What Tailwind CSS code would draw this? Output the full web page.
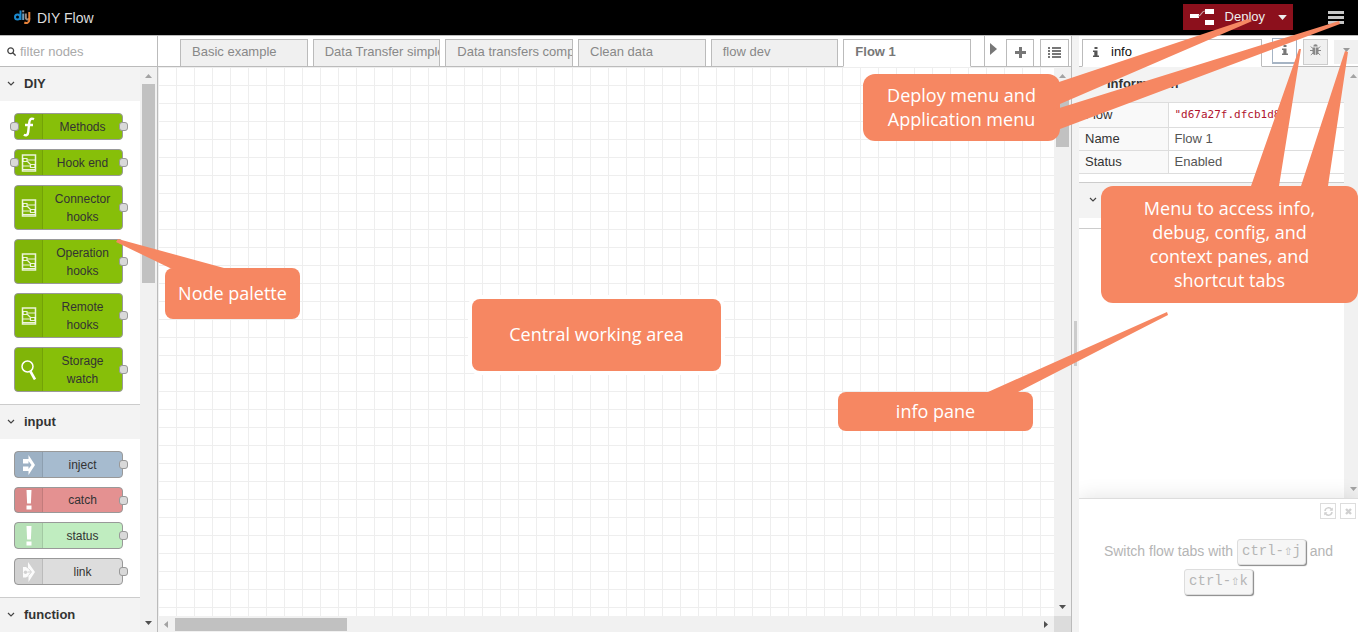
<!DOCTYPE html>
<html lang="en">
<head>
<meta charset="utf-8">
<title>DIY Flow</title>
<script src="https://cdn.jsdelivr.net/npm/@tailwindcss/browser@4"></script>
</head>
<body class="relative flex h-screen flex-col overflow-hidden bg-white pr-0.5 font-['Liberation_Sans',Arial,sans-serif] text-[13px] text-[#333]">

<svg class="hidden">
  <defs>
    <symbol id="hooks" viewBox="0 0 16 20"><g fill="none" stroke="#fff" stroke-opacity=".85"><path d="M1.500 2h13v16h-13z" stroke-width="1.500"/><path d="M2 5.500h4v3H2zM9.500 11.500h4.500v3H9.500zM6 7h8M2 13h7.500M6.500 8.500l3 3" stroke-width="1.200"/><path d="M2 16.500h12" stroke-width="1"/></g></symbol>
    <symbol id="bang" viewBox="0 0 10 20"><path d="M2.500 0h5l-.6 13.500H3.100zM2.500 15.500h5v4h-5z" fill="#fff"/></symbol>
    <symbol id="chev" viewBox="0 0 8 6"><path d="M1 1l3 3 3-3" fill="none" stroke="#444" stroke-width="1.200"/></symbol>
    <symbol id="up" viewBox="0 0 7 4"><path d="M0 4L3.500 0 7 4z"/></symbol>
    <symbol id="down" viewBox="0 0 7 4"><path d="M0 0h7L3.500 4z"/></symbol>
    <symbol id="info" viewBox="0 0 6 10"><path d="M1.500 0h3v2h-3zM0 3.500h4.500V8.500H6V10H0V8.500h1.300V5H0z"/></symbol>
  </defs>
</svg>

<header class="flex h-9 shrink-0 items-center border-b border-[#bbb] bg-black pb-px">
  <svg class="ml-3.5 h-4 w-[17px]" viewBox="0 0 17 16" fill="none" stroke-width="2">
    <circle cx="3.500" cy="8" r="2.500" stroke="#1b8ad0"/><path d="M6.500 1.500v9.500" stroke="#1b8ad0"/>
    <path d="M9.200 4.500V11" stroke="#6d9dbd"/><path d="M9.200 1.300v2" stroke="#8a8f96"/>
    <path d="M11.800 4.500v4c0 2.500 3.500 2.500 3.500.5" stroke="#9a8a80"/><path d="M15.300 3v8c0 3-3 3.500-5 2.500" stroke="#e8833a"/>
  </svg>
  <h1 class="ml-1.5 grow pt-0.5 text-sm text-[#ddd]">DIY Flow</h1>
  <div class="mr-[35px] flex h-[26px] bg-[#8c101c] text-[#eee]">
    <button type="button" class="flex items-center gap-2.5 pl-1.5">
      <svg class="h-4 w-[26px]" viewBox="0 0 26 16"><path d="M1 5h9v4H1zM16 0h9v5h-9zM16 11h9v5h-9z" fill="#fff"/><path d="M9 7c4 0 3-5 7-5" fill="none" stroke="#c9a0a4" stroke-width="1.200"/></svg>
      <span>Deploy</span>
    </button>
    <button type="button" aria-label="Deploy options" class="flex w-[28px] items-center justify-end pr-1.5"><svg class="h-[5px] w-[9px] fill-[#eee]" viewBox="0 0 7 4"><use href="#down"/></svg></button>
  </div>
  <button type="button" aria-label="Application menu" class="mr-3.5 flex w-4 flex-col gap-0.5">
    <span class="h-[3px] w-full bg-[#c7c7c7]"></span><span class="h-[3px] w-full bg-[#c7c7c7]"></span><span class="h-[3px] w-full bg-[#c7c7c7]"></span>
  </button>
</header>

<main class="flex min-h-0 grow">
  <aside class="flex w-[158px] shrink-0 flex-col border-r border-[#bbb]">
    <label class="flex h-[31px] shrink-0 items-center gap-1 border-b border-[#bbb] pl-[7px]">
      <svg class="size-[9px] shrink-0" viewBox="0 0 9 9" fill="none" stroke="#444" stroke-width="1.300"><circle cx="3.700" cy="3.700" r="2.900"/><path d="M5.800 5.800l2.800 2.800"/></svg>
      <input type="text" aria-label="filter nodes" placeholder="filter nodes" class="w-full min-w-0 pt-px outline-none placeholder:text-[#aaa]">
    </label>
    <div class="flex min-h-0 grow overflow-hidden">
      <div class="flex w-[140px] flex-col text-xs">
        <button type="button" class="flex h-[34px] shrink-0 items-center gap-[9px] bg-[#f3f3f3] pl-[7px] text-[13px] font-bold"><svg class="h-1.5 w-2"><use href="#chev"/></svg>DIY</button>
        <ul class="flex shrink-0 flex-col gap-[9px] border-b border-[#ccc] py-3 pl-3.5 text-center leading-[18px]">
          <li class="relative flex h-[27px] w-[109px] items-center rounded border border-[#999] bg-[#87bf09]">
            <span class="flex h-full w-7 items-center justify-center border-r border-black/10 bg-black/5"><svg class="h-5 w-3" viewBox="0 0 12 20" fill="none" stroke="#fff" stroke-width="2.400"><path d="M11 2.200C7.500.5 6.500 3 6.200 6l-1 9c-.3 3-2 4-4.400 2.800M2 8h8"/></svg></span>
            <span class="grow">Methods</span>
            <i class="absolute -left-[5px] size-[9px] rounded-[3px] border border-[#999] bg-[#d9d9d9]"></i><i class="absolute -right-1.5 size-[9px] rounded-[3px] border border-[#999] bg-[#d9d9d9]"></i>
          </li>
          <li class="relative flex h-[27px] w-[109px] items-center rounded border border-[#999] bg-[#87bf09]">
            <span class="flex h-full w-7 items-center justify-center border-r border-black/10 bg-black/5"><svg class="h-5 w-4"><use href="#hooks"/></svg></span>
            <span class="grow">Hook end</span>
            <i class="absolute -left-[5px] size-[9px] rounded-[3px] border border-[#999] bg-[#d9d9d9]"></i><i class="absolute -right-1.5 size-[9px] rounded-[3px] border border-[#999] bg-[#d9d9d9]"></i>
          </li>
          <li class="relative flex h-[45px] w-[109px] items-center rounded border border-[#999] bg-[#87bf09]">
            <span class="flex h-full w-7 items-center justify-center border-r border-black/10 bg-black/5"><svg class="h-5 w-4"><use href="#hooks"/></svg></span>
            <span class="grow">Connector<br>hooks</span>
            <i class="absolute -right-1.5 size-[9px] rounded-[3px] border border-[#999] bg-[#d9d9d9]"></i>
          </li>
          <li class="relative flex h-[45px] w-[109px] items-center rounded border border-[#999] bg-[#87bf09]">
            <span class="flex h-full w-7 items-center justify-center border-r border-black/10 bg-black/5"><svg class="h-5 w-4"><use href="#hooks"/></svg></span>
            <span class="grow">Operation<br>hooks</span>
            <i class="absolute -right-1.5 size-[9px] rounded-[3px] border border-[#999] bg-[#d9d9d9]"></i>
          </li>
          <li class="relative flex h-[45px] w-[109px] items-center rounded border border-[#999] bg-[#87bf09]">
            <span class="flex h-full w-7 items-center justify-center border-r border-black/10 bg-black/5"><svg class="h-5 w-4"><use href="#hooks"/></svg></span>
            <span class="grow">Remote<br>hooks</span>
            <i class="absolute -right-1.5 size-[9px] rounded-[3px] border border-[#999] bg-[#d9d9d9]"></i>
          </li>
          <li class="relative flex h-[45px] w-[109px] items-center rounded border border-[#999] bg-[#87bf09]">
            <span class="flex h-full w-7 items-center justify-center border-r border-black/10 bg-black/5"><svg class="h-5 w-4" viewBox="0 0 16 20" fill="none" stroke="#fff"><circle cx="6.500" cy="6.500" r="5.500" stroke-width="1.500"/><path d="M9.500 11.500l4.500 8" stroke-width="2.600"/></svg></span>
            <span class="grow">Storage<br>watch</span>
            <i class="absolute -right-1.5 size-[9px] rounded-[3px] border border-[#999] bg-[#d9d9d9]"></i>
          </li>
        </ul>
        <button type="button" class="flex h-[34px] shrink-0 items-center gap-[9px] bg-[#f3f3f3] pl-[7px] text-[13px] font-bold"><svg class="h-1.5 w-2"><use href="#chev"/></svg>input</button>
        <ul class="flex shrink-0 flex-col gap-[9px] border-b border-[#ccc] pt-3 pb-[11px] pl-3.5 text-center leading-[18px]">
          <li class="relative flex h-[27px] w-[109px] items-center rounded border border-[#999] bg-[#a6bbcf]">
            <span class="flex h-full w-7 items-center justify-center border-r border-black/10 bg-black/5"><svg class="h-5 w-3" viewBox="0 0 12 20" fill="#fff"><path d="M0 4h5.500V0L12 10 5.500 20v-4H0v-4.500h5.500V14l3-4-3-4v2.500H0z"/></svg></span>
            <span class="grow">inject</span>
            <i class="absolute -right-1.5 size-[9px] rounded-[3px] border border-[#999] bg-[#d9d9d9]"></i>
          </li>
          <li class="relative flex h-[26px] w-[109px] items-center rounded border border-[#999] bg-[#e49191]">
            <span class="flex h-full w-7 items-center justify-center border-r border-black/10 bg-black/5"><svg class="h-5 w-2.5"><use href="#bang"/></svg></span>
            <span class="grow">catch</span>
            <i class="absolute -right-1.5 size-[9px] rounded-[3px] border border-[#999] bg-[#d9d9d9]"></i>
          </li>
          <li class="relative flex h-[27px] w-[109px] items-center rounded border border-[#999] bg-[#c0edc0]">
            <span class="flex h-full w-7 items-center justify-center border-r border-black/10 bg-black/5"><svg class="h-5 w-2.5"><use href="#bang"/></svg></span>
            <span class="grow">status</span>
            <i class="absolute -right-1.5 size-[9px] rounded-[3px] border border-[#999] bg-[#d9d9d9]"></i>
          </li>
          <li class="relative mb-px flex h-[27px] w-[109px] items-center rounded border border-[#999] bg-[#ddd]">
            <span class="flex h-full w-7 items-center justify-center border-r border-black/10 bg-black/5"><svg class="h-5 w-3" viewBox="0 0 12 20"><path d="M0 5h3l2 1.500V0L12 10 5.500 20v-6L3 15.500H0z" fill="#fff" fill-opacity=".9"/><path d="M5.500 6.500C7 8 7.500 9 8.500 10c-1 1-1.500 2-3 3.500M4.500 10H8" fill="none" stroke="#cfcfcf"/><circle cx="2.500" cy="10.200" r="1.700" fill="#d2d2d2"/></svg></span>
            <span class="grow">link</span>
            <i class="absolute -right-1.5 size-[9px] rounded-[3px] border border-[#999] bg-[#d9d9d9]"></i>
          </li>
        </ul>
        <button type="button" class="flex h-[34px] shrink-0 items-center gap-[9px] bg-[#f3f3f3] pl-[7px] text-[13px] font-bold"><svg class="h-1.5 w-2"><use href="#chev"/></svg>function</button>
      </div>
      <div class="flex w-[17px] flex-col items-center bg-[#f1f1f1] pt-[7px] pb-[7px]">
        <svg class="mb-1.5 h-1 w-[7px] shrink-0 fill-[#a3a3a3]"><use href="#up"/></svg>
        <div class="h-[199px] w-[13px] bg-[#c1c1c1]"></div>
        <svg class="mt-auto h-1 w-[7px] shrink-0 fill-[#505050]"><use href="#down"/></svg>
      </div>
    </div>
  </aside>

  <section class="flex min-w-0 grow flex-col border-r border-[#bbb]">
    <div class="flex h-[31px] shrink-0 items-end border-b border-[#bbb] text-[#888]">
      <div role="tablist" class="-mb-px flex min-w-0 grow gap-[5px] pl-[22px] pr-[13px]">
        <button type="button" role="tab" class="h-7 min-w-0 flex-1 overflow-hidden border border-[#bbb] bg-[#f0f0f0] pb-0.5 pl-[11px] text-left whitespace-nowrap">Basic example</button>
        <button type="button" role="tab" class="h-7 min-w-0 flex-1 overflow-hidden border border-[#bbb] bg-[#f0f0f0] pb-0.5 pl-[11px] text-left whitespace-nowrap">Data Transfer simple</button>
        <button type="button" role="tab" class="h-7 min-w-0 flex-1 overflow-hidden border border-[#bbb] bg-[#f0f0f0] pb-0.5 pl-[11px] text-left whitespace-nowrap">Data transfers complex</button>
        <button type="button" role="tab" class="h-7 min-w-0 flex-1 overflow-hidden border border-[#bbb] bg-[#f0f0f0] pb-0.5 pl-[11px] text-left whitespace-nowrap">Clean data</button>
        <button type="button" role="tab" class="h-7 min-w-0 flex-1 overflow-hidden border border-[#bbb] bg-[#f0f0f0] pb-0.5 pl-[11px] text-left whitespace-nowrap">flow dev</button>
        <button type="button" role="tab" aria-selected="true" class="h-7 min-w-0 flex-1 overflow-hidden border border-[#bbb] border-b-white bg-white pb-0.5 pl-[11px] text-left font-bold whitespace-nowrap text-[#777]">Flow 1</button>
      </div>
      <button type="button" aria-label="Scroll tabs" class="flex h-[30px] w-[22px] items-center justify-center border-l border-[#bbb] pr-1 pb-1"><svg class="h-3 w-2" viewBox="0 0 8 12"><path d="M0 0l7 6-7 6z" fill="#777"/></svg></button>
      <button type="button" aria-label="Add flow" class="flex h-[27px] w-7 items-center justify-center border border-b-0 border-[#bbb] pb-0.5"><svg class="size-[11px]" viewBox="0 0 11 11"><path d="M4 0h3v4h4v3H7v4H4V7H0V4h4z" fill="#777"/></svg></button>
      <button type="button" aria-label="List flows" class="mr-0.5 ml-1.5 flex h-[27px] w-[29px] items-center justify-center border border-b-0 border-[#bbb] pb-0.5"><svg class="h-[11px] w-[13px]" viewBox="0 0 13 11"><path d="M0 0h2v2H0zM4 0h9v2H4zM0 3h2v2H0zM4 3h9v2H4zM0 6h2v2H0zM4 6h9v2H4zM0 9h2v2H0zM4 9h9v2H4z" fill="#777"/></svg></button>
    </div>
    <div class="flex min-h-0 grow">
      <div class="grow bg-white bg-[linear-gradient(to_right,#eee_1px,transparent_1px),linear-gradient(to_bottom,#eee_1px,transparent_1px)] bg-[size:18px_18px]"></div>
      <div class="flex w-[17px] flex-col items-center bg-[#f1f1f1] pt-[7px] pb-[7px]">
        <svg class="mb-1.5 h-1 w-[7px] shrink-0 fill-[#a3a3a3]"><use href="#up"/></svg>
        <div class="h-[63px] w-[13px] bg-[#c1c1c1]"></div>
        <svg class="mt-auto h-1 w-[7px] shrink-0 fill-[#505050]"><use href="#down"/></svg>
      </div>
    </div>
    <div class="flex h-4 shrink-0 items-center bg-[#f1f1f1] pl-1.5">
      <svg class="mr-[7px] h-[7px] w-1" viewBox="0 0 4 7"><path d="M4 0v7L0 3.500z" fill="#a3a3a3"/></svg>
      <div class="h-[13px] w-[172px] bg-[#c1c1c1]"></div>
      <svg class="mr-1.5 ml-auto h-[7px] w-1" viewBox="0 0 4 7"><path d="M0 0v7l4-3.500z" fill="#505050"/></svg>
      <div class="h-full w-[17px] bg-[#dcdcdc]"></div>
    </div>
  </section>

  <div class="flex w-[7px] shrink-0 items-center justify-center bg-[#f3f3f3]"><span class="mb-[-18px] h-[45px] w-[3px] bg-[#ccc]"></span></div>

  <aside class="flex w-[279px] shrink-0 flex-col">
    <div class="flex h-[31px] shrink-0 items-end border-b border-[#bbb] pl-[3px]">
      <button type="button" role="tab" aria-selected="true" class="-mb-px flex h-7 w-[180px] items-center gap-3 border border-[#bbb] border-b-white bg-white pb-0.5 pl-2.5 text-[#111]"><svg class="h-2.5 w-1.5 fill-[#555]"><use href="#info"/></svg>info</button>
      <button type="button" aria-label="Info" class="mb-0.5 ml-2.5 flex h-[26px] w-[25px] items-center justify-center border border-b-2 border-[#a6b4c4] pb-px"><svg class="h-2.5 w-1.5 fill-[#777]"><use href="#info"/></svg></button>
      <button type="button" aria-label="Debug" class="mb-px ml-1.5 flex h-[26px] w-[25px] items-center justify-center border border-[#ccc] bg-[#f0f0f0] pb-1"><svg class="h-3 w-[11px]" viewBox="0 0 11 12"><path d="M3.300 2.500a2.200 2.200 0 0 1 4.400 0zM2.500 3.500h2.700v7.500C3.300 11 2.500 9.500 2.500 7.500zM5.800 3.500h2.700v4c0 2-.8 3.500-2.700 3.500z" fill="#888"/><path d="M.8 2.500l2 2M0 6.500h3M.8 11l2.200-2M10.200 2.500l-2 2M11 6.500H8M10.200 11L8 9" stroke="#888"/></svg></button>
      <button type="button" aria-label="More tabs" class="mb-0.5 ml-1.5 flex h-6 w-6 items-center justify-center bg-[#f0f0f0] pb-1"><svg class="h-1 w-[7px] fill-[#999]"><use href="#down"/></svg></button>
    </div>
    <div class="flex h-[431px] shrink-0">
      <div class="flex w-[265px] flex-col">
        <button type="button" class="flex h-[35px] shrink-0 items-center gap-2.5 bg-[#f3f3f3] pb-0.5 pl-2.5 font-bold"><svg class="h-1.5 w-2"><use href="#chev"/></svg>Information</button>
        <table class="w-full border-collapse text-left">
          <tr class="h-[25px] border-y border-[#ddd]"><th class="w-[89px] border-r border-[#ddd] bg-[#f9f9f9] pl-1.5 font-normal">Flow</th><td class="pl-1.5 font-['DejaVu_Sans_Mono',monospace] text-[11px] text-[#b0132e]">"d67a27f.dfcb1d8"</td></tr>
          <tr class="h-[23px] border-y border-[#ddd]"><th class="border-r border-[#ddd] bg-[#f9f9f9] pl-1.5 font-normal">Name</th><td class="pl-1.5 text-[#555]">Flow 1</td></tr>
          <tr class="h-[23px] border-y border-[#ddd]"><th class="border-r border-[#ddd] bg-[#f9f9f9] pl-1.5 font-normal">Status</th><td class="pl-1.5 text-[#555]">Enabled</td></tr>
        </table>
        <button type="button" aria-label="Description" class="mt-2 flex h-9 shrink-0 items-center border-t border-[#ccc] bg-[#f3f3f3] pb-0.5 pl-2.5"><svg class="h-1.5 w-2"><use href="#chev"/></svg></button>
        <div class="mt-2.5 grow border-t border-[#ccc]"></div>
      </div>
      <div class="flex grow flex-col items-center justify-between bg-[#f1f1f1] py-[7px]">
        <svg class="ml-1 h-1 w-[7px] fill-[#a3a3a3]"><use href="#up"/></svg>
        <svg class="ml-1 h-1 w-[7px] fill-[#a3a3a3]"><use href="#down"/></svg>
      </div>
    </div>
    <div class="flex grow flex-col border-t border-[#ddd] bg-white pt-1 shadow-[0_0_20px_rgba(0,0,0,0.12)] [clip-path:inset(-20px_0_0_0)]">
      <div class="flex justify-end gap-1 pr-0.5">
        <button type="button" aria-label="Next tip" class="flex size-4 items-center justify-center border border-[#ddd]"><svg class="size-[9px]" viewBox="0 0 9 9" fill="none" stroke="#d0d0d0" stroke-width="1.500"><path d="M1 4a3.500 3.500 0 0 1 6.500-1.500M8 5a3.500 3.500 0 0 1-6.500 1.500"/><path d="M8.800.5v3.300H5.500zM.2 8.500V5.200h3.300z" fill="#d0d0d0" stroke="none"/></svg></button>
        <button type="button" aria-label="Close tips" class="flex size-4 items-center justify-center border border-[#ddd]"><svg class="size-[7px]" viewBox="0 0 7 7"><path d="M1 1l5 5M6 1L1 6" stroke="#d0d0d0" stroke-width="2.400"/></svg></button>
      </div>
      <p class="mt-[18px] px-4 text-center text-sm leading-7 text-[#b5b5b5]">Switch flow tabs with <kbd class="my-px inline-block h-[26px] rounded-[3px] border border-[#ddd] bg-[#f6f6f6] px-1 align-middle font-['Liberation_Mono','DejaVu_Sans_Mono',monospace] text-sm leading-[22px] shadow-[1px_1px_1px_#888]">ctrl-⇧j</kbd> and <kbd class="my-px inline-block h-[26px] rounded-[3px] border border-[#ddd] bg-[#f6f6f6] px-1 align-middle font-['Liberation_Mono','DejaVu_Sans_Mono',monospace] text-sm leading-[22px] shadow-[1px_1px_1px_#888]">ctrl-⇧k</kbd></p>
    </div>
  </aside>
</main>

<!-- Callouts laid over the editor -->
<div class="pointer-events-none absolute inset-0 overflow-hidden text-center font-['Open_Sans','Noto_Sans',sans-serif] text-lg leading-6 font-medium text-white">
  <div class="absolute top-[268px] left-[165px] flex h-[51px] w-[135px] items-center justify-center rounded-lg bg-[#f68762] pb-0.5">
    <svg class="absolute -top-[30px] -left-[50px] h-8 w-[110px] fill-[#f68762]" viewBox="0 0 110 32"><path d="M3 1L109 30v2H59L1 4z"/></svg>
    <span class="relative">Node palette</span>
  </div>
  <div class="absolute top-[299px] left-[472px] flex h-[72px] w-[249px] items-center justify-center rounded-lg bg-[#f68762] pb-0.5 ring-4 ring-white">Central working area</div>
  <div class="absolute top-[392px] right-[327px] flex h-[39px] w-[195px] items-center justify-center rounded-lg bg-[#f68762] pb-0.5">
    <svg class="absolute -top-20 left-[150px] h-[82px] w-[182px] fill-[#f68762]" viewBox="0 0 182 82"><path d="M0 80L179 0l1 3L30 80v2H0z"/></svg>
    <span>info pane</span>
  </div>
  <div class="absolute top-[74px] right-[300px] flex h-[67px] w-[197px] items-center justify-center rounded-xl bg-[#f68762] pb-0.5">
    <svg class="absolute -top-[60px] left-[190px] h-[120px] w-[290px] fill-[#f68762]" viewBox="0 0 290 120"><path d="M0 70L195 5l4 2-2 1L7 90H0zM0 96L286 7l1 3L7 115H0z"/></svg>
    <span>Deploy menu and<br>Application menu</span>
  </div>
  <div class="absolute top-[186px] right-0.5 flex h-[117px] w-[257px] items-center justify-center rounded-xl bg-[#f68762] pb-0.5">
    <svg class="absolute -top-[138px] left-[150px] h-[140px] w-[100px] fill-[#f68762]" viewBox="0 0 100 140"><path d="M0 138L48 1h2L28 138v2H0zM50 138L94 3l3 1L77 138v2H50z"/></svg>
    <span>Menu to access info,<br>debug, config, and<br>context panes, and<br>shortcut tabs</span>
  </div>
</div>
</body>
</html>
